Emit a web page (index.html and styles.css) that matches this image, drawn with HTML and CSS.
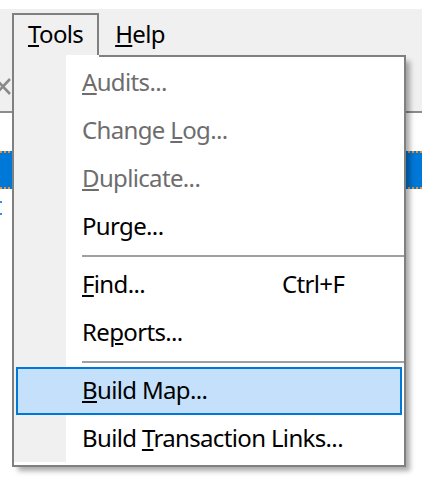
FILE: index.html
```html
<!DOCTYPE html>
<html>
<head>
<meta charset="utf-8">
<link rel="stylesheet" href="styles.css">
</head>
<body>
<div class="window">
  <div class="topstrip"></div>
  <div class="toolbar">
    <nav class="menubar">
      <span class="mb-item open"><u>T</u>ools</span>
      <span class="mb-item"><u>H</u>elp</span>
    </nav>
    <svg class="close-x" width="16" height="17" viewBox="0 0 16 17">
      <path d="M1 1 L15 16 M15 1 L1 16" stroke="#8a8a8a" stroke-width="2.6" fill="none"/>
    </svg>
  </div>
  <div class="content">
    <div class="selrow"></div>
    <div class="focus-dots"><i></i><i></i></div>
  </div>
</div>

<div class="menu">
  <ul class="items">
    <li class="item disabled"><span><u>A</u>udits...</span></li>
    <li class="item disabled"><span>Change <u>L</u>og...</span></li>
    <li class="item disabled"><span><u>D</u>uplicate...</span></li>
    <li class="item"><span>Purge...</span></li>
    <li class="sep"></li>
    <li class="item"><span><u>F</u>ind...</span><span class="key">Ctrl+F</span></li>
    <li class="item"><span>Re<u>p</u>orts...</span></li>
    <li class="sep"></li>
    <li class="item hot"><span><u>B</u>uild Map...</span></li>
    <li class="item"><span>Build <u>T</u>ransaction Links...</span></li>
  </ul>
</div>
</body>
</html>
```

FILE: styles.css
```css
* { box-sizing: border-box; }

html, body {
  margin: 0;
  padding: 0;
  width: 422px;
  height: 488px;
  overflow: hidden;
  background: #fff;
  font-family: "Noto Sans", "Open Sans", sans-serif;
  font-size: 24px;
  letter-spacing: -0.65px;
  color: #000;
}

u {
  text-decoration: underline;
  text-decoration-thickness: 2px;
  text-underline-offset: 2px;
}

.window {
  display: flex;
  flex-direction: column;
  height: 488px;
}

.topstrip {
  height: 9px;
  background: #fff;
}

.toolbar {
  height: 104px;
  background: #f0f0f0;
  border-bottom: 2px solid #8c8c8c;
  padding-top: 4px;
  display: flex;
  flex-direction: column;
}

.menubar {
  display: flex;
  padding-left: 12px;
  height: 44px;
}

.mb-item {
  height: 44px;
  padding: 0 14px;
  border: 2px solid transparent;
  border-bottom: 0;
  line-height: 37px;
}

.mb-item.open {
  border-color: #808080;
}

.close-x {
  display: block;
  margin-top: 21px;
  margin-left: -5px;
}

.content {
  flex: 1;
  background: #fff;
  padding-top: 38px;
}

.selrow {
  height: 38px;
  background:
    repeating-linear-gradient(90deg, #f7902a 0 2px, transparent 2px 4px) top left / 100% 2px no-repeat,
    repeating-linear-gradient(90deg, #f7902a 0 2px, transparent 2px 4px) bottom left / 100% 2px no-repeat,
    #0078d7;
}

.focus-dots {
  display: flex;
  flex-direction: column;
  gap: 10px;
  padding-top: 12px;
}

.focus-dots i {
  display: block;
  width: 2px;
  height: 2px;
  background: #3a8ee0;
}

.menu {
  position: absolute;
  left: 12px;
  top: 55px;
  width: 394px;
  height: 412px;
  border: 2px solid #808080;
  border-top: 0;
  padding: 4px 0 2px;
  background:
    linear-gradient(90deg, #f0f0f0 52px, #fff 52px) top left / 100% calc(100% - 3px) no-repeat,
    #fff;
  box-shadow: 5px 5px 5px -1px rgba(0, 0, 0, 0.33);
}

.menu::before {
  content: "";
  position: absolute;
  top: 0;
  left: 85px;
  right: -2px;
  height: 2px;
  background: #808080;
}

.items {
  list-style: none;
  margin: 0;
  padding: 0;
}

.item {
  display: grid;
  grid-template-columns: 200px auto;
  height: 48px;
  margin: 0 2px;
  padding-left: 64px;
  border: 2px solid transparent;
  line-height: 42px;
  white-space: nowrap;
}

.item.disabled {
  color: #6d6d6d;
}

.item.hot {
  background: #c4e0fb;
  border-color: #0078d7;
}

.sep {
  height: 2px;
  margin: 4px 0 4px 68px;
  background: #a0a0a0;
}
```
